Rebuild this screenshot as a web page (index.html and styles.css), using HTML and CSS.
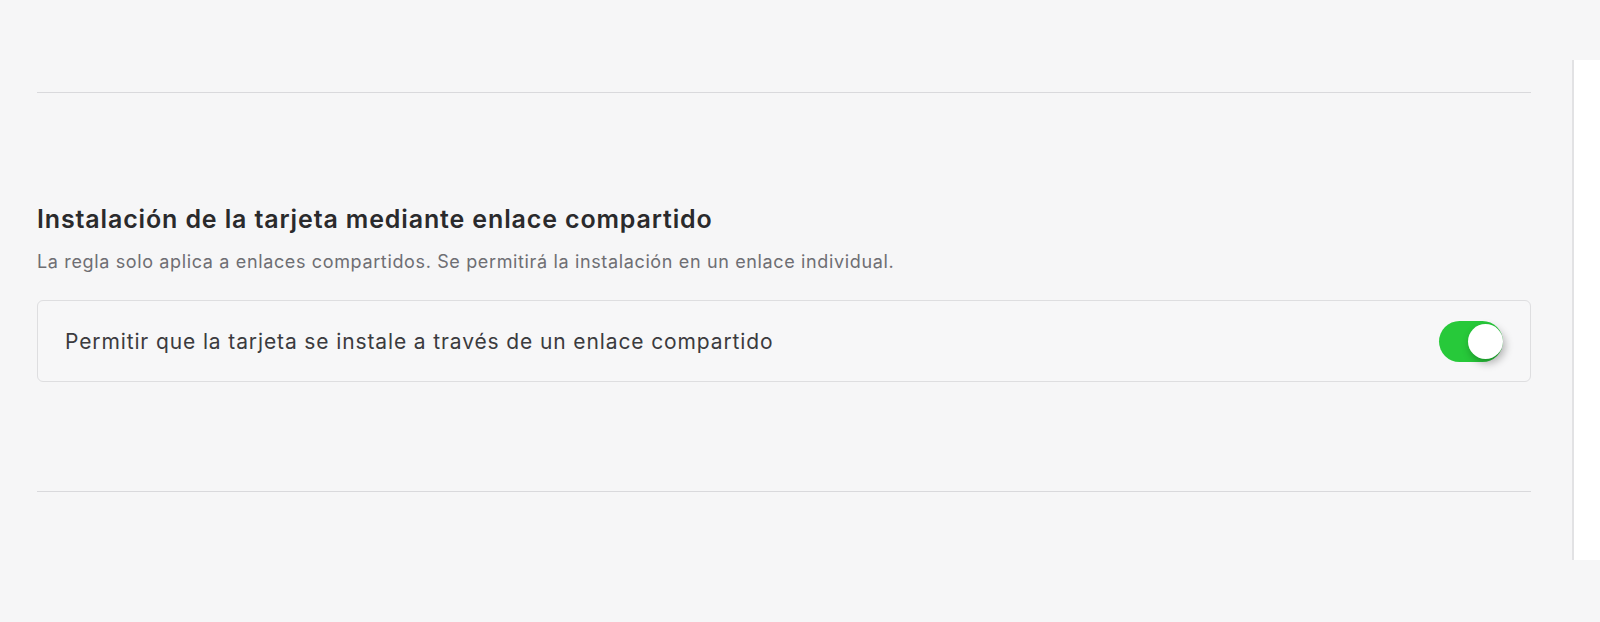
FILE: index.html
```html
<!DOCTYPE html>
<html lang="es">
<head>
  <meta charset="UTF-8" />
  <meta name="viewport" content="width=device-width, initial-scale=1.0" />
  <title>Configuración de la tarjeta</title>
  <link rel="stylesheet" href="styles.css">
</head>
<body>
  <div class="page">
    <main class="content">
      <hr class="divider" />

      <section class="setting">
        <h2 class="setting-title">Instalación de la tarjeta mediante enlace compartido</h2>
        <p class="setting-desc">La regla solo aplica a enlaces compartidos. Se permitirá la instalación en un enlace individual.</p>

        <div class="option">
          <span class="option-label">Permitir que la tarjeta se instale a través de un enlace compartido</span>
          <label class="switch">
            <input type="checkbox" checked />
            <span class="slider"></span>
          </label>
        </div>
      </section>

      <hr class="divider" />
    </main>

    <aside class="side-panel"></aside>
  </div>
</body>
</html>
```

FILE: styles.css
```css
:root {
  --bg: #f6f6f7;
  --line: #d9d9dc;
  --title: #2a2a2c;
  --muted: #6e6e73;
  --text: #3b3b3e;
  --green: #27c93a;
}

* {
  box-sizing: border-box;
}

body {
  margin: 0;
  font-family: Inter, 'Noto Sans', sans-serif;
  background: var(--bg);
  color: var(--text);
}

.page {
  display: flex;
  align-items: flex-start;
  min-height: 622px;
}

.content {
  flex: 1;
  padding: 92px 41px 0 37px;
}

.divider {
  margin: 0;
  border: none;
  height: 1px;
  background: var(--line);
}

.setting {
  padding: 110px 0 109px;
}

.setting-title {
  margin: 0;
  font-size: 25px;
  line-height: 32px;
  font-weight: 600;
  color: var(--title);
  letter-spacing: 0.86px;
}

.setting-desc {
  margin: 15px 0 0;
  font-size: 18px;
  line-height: 24px;
  color: var(--muted);
  letter-spacing: 0.64px;
}

.option {
  margin-top: 26px;
  height: 82px;
  display: flex;
  align-items: center;
  justify-content: space-between;
  padding: 0 27px;
  border: 1px solid #dedee0;
  border-radius: 6px;
  background: #f7f7f8;
}

.option-label {
  font-size: 21px;
  color: var(--text);
  letter-spacing: 0.88px;
}

.switch {
  position: relative;
  width: 64px;
  height: 41px;
  cursor: pointer;
}

.switch input {
  display: none;
}

.slider {
  position: absolute;
  inset: 0;
  border-radius: 21px;
  background: #d0d0d4;
  transition: background 0.2s;
}

.slider::before {
  content: "";
  position: absolute;
  top: 3px;
  left: 3px;
  width: 35px;
  height: 35px;
  border-radius: 50%;
  background: #fff;
  box-shadow: 2px 4px 8px rgba(0, 0, 0, 0.3);
  transition: transform 0.2s;
}

.switch input:checked + .slider {
  background: var(--green);
}

.switch input:checked + .slider::before {
  transform: translateX(26px);
}

.side-panel {
  width: 28px;
  height: 500px;
  margin-top: 60px;
  background: #fff;
  border-left: 2px solid #e2e2e4;
}
```
